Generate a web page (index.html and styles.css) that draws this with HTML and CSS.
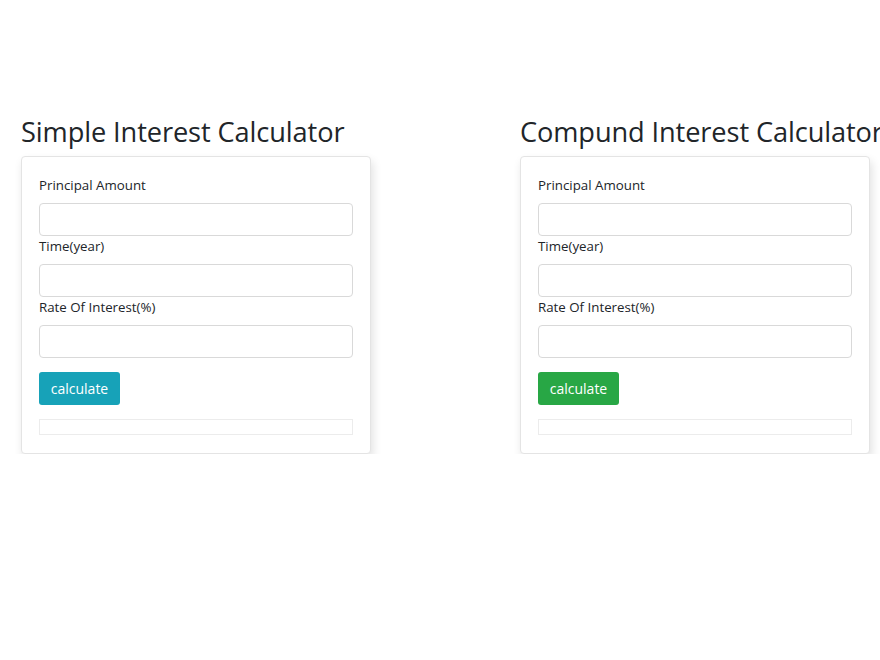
FILE: index.html
```html
<!DOCTYPE html>
<html lang="en">
<head>
<meta charset="utf-8">
<title>Interest Calculator</title>
<link rel="stylesheet" href="styles.css">
</head>
<body>
<div class="page">
  <section class="calc">
    <h2 class="title">Simple Interest Calculator</h2>
    <div class="card">
      <label class="lbl">Principal Amount</label>
      <input class="field" type="text">
      <label class="lbl">Time(year)</label>
      <input class="field" type="text">
      <label class="lbl">Rate Of Interest(%)</label>
      <input class="field" type="text">
      <button class="btn btn-info">calculate</button>
      <div class="result"></div>
    </div>
  </section>
  <section class="calc">
    <h2 class="title">Compund Interest Calculator</h2>
    <div class="card">
      <label class="lbl">Principal Amount</label>
      <input class="field" type="text">
      <label class="lbl">Time(year)</label>
      <input class="field" type="text">
      <label class="lbl">Rate Of Interest(%)</label>
      <input class="field" type="text">
      <button class="btn btn-success">calculate</button>
      <div class="result"></div>
    </div>
  </section>
</div>
</body>
</html>
```
FILE: styles.css
```css
html, body {
  margin: 0;
  padding: 0;
  background: #fff;
}
body {
  font-family: "Open Sans", "DejaVu Sans", sans-serif;
  color: #212529;
}
.page {
  display: flex;
  gap: 149px;
  padding: 112px 0 0 21px;
}
.calc {
  width: 350px;
  flex: none;
}
.title {
  margin: 0 0 4px 0;
  font-weight: 400;
  font-size: 27.2px;
  letter-spacing: -0.1px;
  line-height: 40px;
  white-space: nowrap;
  color: #212529;
}
.card {
  box-sizing: border-box;
  border: 1px solid #e4e4e4;
  border-radius: 4px;
  padding: 18px 17px 18px 17px;
  display: flex;
  flex-direction: column;
  box-shadow: 2px 5px 10px rgba(0, 0, 0, 0.12);
  background: #fff;
}
.lbl {
  display: block;
  font-size: 13.3px;
  line-height: 20px;
  margin-bottom: 8px;
}
.field {
  box-sizing: border-box;
  height: 33px;
  width: 100%;
  border: 1px solid #d9d9d9;
  border-radius: 4px;
  margin: 0;
  padding: 0 10px;
  font: inherit;
}
.btn {
  align-self: flex-start;
  margin-top: 14px;
  height: 33px;
  width: 81px;
  border: none;
  border-radius: 3px;
  color: #fff;
  font-family: inherit;
  font-size: 14px;
  padding: 0;
}
.btn-info { background: #17a2b8; }
.btn-success { background: #28a745; }
.result {
  margin-top: 14px;
  height: 14px;
  border: 1px solid #ececec;
}
```
